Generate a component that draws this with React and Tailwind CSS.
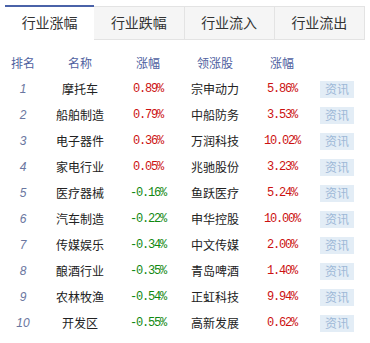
import { useState } from 'react'

const TABS = ['行业涨幅', '行业跌幅', '行业流入', '行业流出']

const ROWS = [
    { rank: 1, name: '摩托车', pct: '0.89%', lead: '宗申动力', leadPct: '5.86%' },
    { rank: 2, name: '船舶制造', pct: '0.79%', lead: '中船防务', leadPct: '3.53%' },
    { rank: 3, name: '电子器件', pct: '0.36%', lead: '万润科技', leadPct: '10.02%' },
    { rank: 4, name: '家电行业', pct: '0.05%', lead: '兆驰股份', leadPct: '3.23%' },
    { rank: 5, name: '医疗器械', pct: '-0.16%', lead: '鱼跃医疗', leadPct: '5.24%' },
    { rank: 6, name: '汽车制造', pct: '-0.22%', lead: '申华控股', leadPct: '10.00%' },
    { rank: 7, name: '传媒娱乐', pct: '-0.34%', lead: '中文传媒', leadPct: '2.00%' },
    { rank: 8, name: '酿酒行业', pct: '-0.35%', lead: '青岛啤酒', leadPct: '1.40%' },
    { rank: 9, name: '农林牧渔', pct: '-0.54%', lead: '正虹科技', leadPct: '9.94%' },
    { rank: 10, name: '开发区', pct: '-0.55%', lead: '高新发展', leadPct: '0.62%' },
]

const cols = 'grid grid-cols-[36px_78px_58px_76px_58px_52px]'

function Pct({ value }) {
    const down = value.startsWith('-')
    return (
        <span
            className={`font-['Liberation_Mono',monospace] text-[12px] tracking-[-1.2px] ${
                down ? 'text-[#118811]' : 'text-[#cc1111]'
            }`}
        >
            {value}
        </span>
    )
}

export default function App() {
    const [active, setActive] = useState(0)

    return (
        <div className="h-[343px] w-[370px] bg-white pl-[5px] pt-[5px] font-['Noto_Sans_CJK_SC',sans-serif]">
            <div className="flex h-[35px] w-[360px]">
                {TABS.map((t, i) =>
                    i === active ? (
                        <button
                            key={t}
                            onClick={() => setActive(i)}
                            className="flex-1 border-t-2 border-[#4a62a8] bg-white pb-[2px] text-[14px] text-[#333]"
                        >
                            {t}
                        </button>
                    ) : (
                        <button
                            key={t}
                            onClick={() => setActive(i)}
                            className="mt-[1px] flex-1 border border-l-0 border-[#e3e3e3] bg-[#f5f5f5] pb-[2px] text-[14px] text-[#333] first:border-l"
                        >
                            {t}
                        </button>
                    )
                )}
            </div>

            <div className="mt-[10px]">
                <div className={`${cols} h-[26px] items-center text-center text-[12px] text-[#4f5fa0]`}>
                    <span>排名</span>
                    <span>名称</span>
                    <span>涨幅</span>
                    <span>领涨股</span>
                    <span>涨幅</span>
                    <span />
                </div>

                {ROWS.map((r) => (
                    <div key={r.rank} className={`${cols} h-[26px] items-center text-center text-[12px]`}>
                        <span className="font-['Liberation_Sans',sans-serif] text-[12px] italic text-[#6a76a0]">
                            {r.rank}
                        </span>
                        <span className="text-[#222]">{r.name}</span>
                        <Pct value={r.pct} />
                        <span className="text-[#222]">{r.lead}</span>
                        <Pct value={r.leadPct} />
                        <span className="flex justify-center">
                            <span className="flex h-[17px] w-[34px] items-center justify-center bg-[#e3edf6] text-[12px] text-[#9db8d6]">
                                资讯
                            </span>
                        </span>
                    </div>
                ))}
            </div>
        </div>
    )
}
